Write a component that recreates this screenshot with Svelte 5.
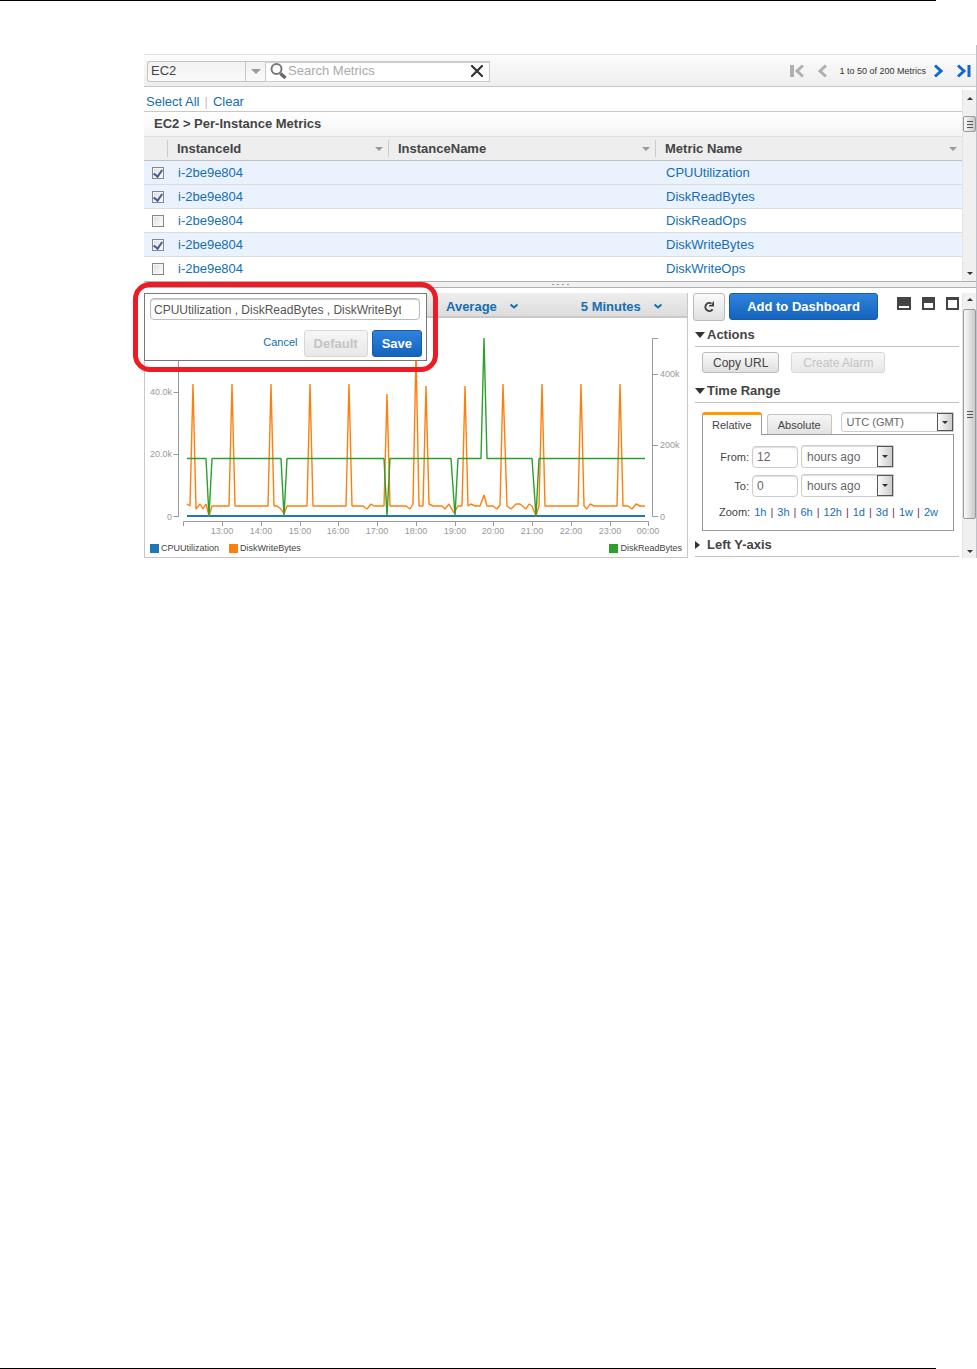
<script>
  let service = $state('EC2');
  let search = $state('');
  let graphTitle = $state('CPUUtilization , DiskReadBytes , DiskWriteBytes');
  let from = $state('12');
  let to = $state('0');
  let rows = $state([
    { id: 'i-2be9e804', metric: 'CPUUtilization', on: true },
    { id: 'i-2be9e804', metric: 'DiskReadBytes', on: true },
    { id: 'i-2be9e804', metric: 'DiskReadOps', on: false },
    { id: 'i-2be9e804', metric: 'DiskWriteBytes', on: true },
    { id: 'i-2be9e804', metric: 'DiskWriteOps', on: false }
  ]);
  const zooms = ['1h', '3h', '6h', '12h', '1d', '3d', '1w', '2w'];
  const hours = ['13:00', '14:00', '15:00', '16:00', '17:00', '18:00', '19:00', '20:00', '21:00', '22:00', '23:00', '00:00'];
  const hourX = (i) => Math.round(77 + i * 38.75);

  const writes =
    '42,186 45,188 48,66 51,191 55,186 58,191 61,186 64,198 67,188 84,188 87,66 90,188 123,188 126,66 129,188 132,188 136,191 139,196 142,188 162,188 165,66 168,188 201,188 204,66 207,188 218,188 222,191 226,186 229,188 239,188 242,76 245,188 261,188 265,191 268,186 271,34 274,188 278,188 281,68 284,186 288,188 297,188 300,191 304,186 309,195 313,188 317,188 320,68 323,188 326,186 330,188 335,188 339,177 342,188 348,188 352,191 355,187 358,66 362,188 366,191 371,186 375,186 381,191 384,186 387,188 391,198 394,188 397,66 400,188 433,188 436,66 439,188 442,191 445,186 449,188 472,188 475,66 478,188 483,188 487,191 491,186 495,188 500,188';
  const reads =
    '42,140.5 61,140.5 64,198 67,140.5 136,140.5 139,198 142,140.5 239,140.5 242,198 245,140.5 306,140.5 310,198 313,140.5 336,140.5 339,20 342,140.5 387,140.5 391,198 394,140.5 500,140.5';
</script>

<div class="page">
  <main class="console">
    <form class="toolbar" onsubmit={(e) => e.preventDefault()}>
      <div class="service">
        <select aria-label="Service" bind:value={service}><option>EC2</option></select>
        <span class="service-arrow"><i class="tri"></i></span>
      </div>
      <div class="search">
        <svg width="17" height="17" viewBox="0 0 17 17" aria-hidden="true">
          <circle cx="6.5" cy="6" r="5" fill="#fff" stroke="#777" stroke-width="2" />
          <path d="M10.5 10.5l5 4.5" stroke="#666" stroke-width="3.4" />
        </svg>
        <input aria-label="Search Metrics" placeholder="Search Metrics" bind:value={search} />
        <button class="bare" type="button" aria-label="Clear search" onclick={() => (search = '')}>
          <svg width="14" height="14" viewBox="0 0 14 14"><path d="M2 2l10 10M12 2L2 12" stroke="#333" stroke-width="2.2" stroke-linecap="round" /></svg>
        </button>
      </div>
      <nav class="pager" aria-label="Pages">
        <button class="bare" type="button" aria-label="First page" disabled>
          <svg width="14" height="14" viewBox="0 0 14 14" fill="none" stroke="#b0b0b0"><path d="M2 1v12" stroke-width="4" /><path d="M13 1.5L7 7l6 5.5" stroke-width="3" /></svg>
        </button>
        <button class="bare prev" type="button" aria-label="Previous page" disabled>
          <svg width="9" height="14" viewBox="0 0 9 14" fill="none" stroke="#b0b0b0"><path d="M8 1.5L2 7l6 5.5" stroke-width="3" /></svg>
        </button>
        <span>1 to 50 of 200 Metrics</span>
        <button class="bare next" type="button" aria-label="Next page">
          <svg width="9" height="14" viewBox="0 0 9 14" fill="none" stroke="#1168cf"><path d="M1 1.5L7 7l-6 5.5" stroke-width="3" /></svg>
        </button>
        <button class="bare" type="button" aria-label="Last page">
          <svg width="14" height="14" viewBox="0 0 14 14" fill="none" stroke="#1168cf"><path d="M1 1.5L7 7l-6 5.5" stroke-width="3" /><path d="M12 1v12" stroke-width="3" /></svg>
        </button>
      </nav>
    </form>

    <section class="metrics">
      <div class="list">
        <div class="pick"><a href="#all">Select All</a><span>|</span><a href="#clear">Clear</a></div>
        <h2 class="group">EC2 &gt; Per-Instance Metrics</h2>
        <table>
          <colgroup><col class="c-check" /><col class="c-id" /><col class="c-name" /><col /></colgroup>
          <thead>
            <tr>
              <th aria-label="Selected"></th>
              <th><div>InstanceId<i class="tri"></i></div></th>
              <th><div>InstanceName<i class="tri"></i></div></th>
              <th><div>Metric Name<i class="tri"></i></div></th>
            </tr>
          </thead>
          <tbody>
            {#each rows as row}
              <tr class:on={row.on}>
                <td class="check"><input type="checkbox" aria-label={row.metric} bind:checked={row.on} /></td>
                <td>{row.id}</td>
                <td></td>
                <td>{row.metric}</td>
              </tr>
            {/each}
          </tbody>
        </table>
      </div>
      <div class="scroll upper" aria-hidden="true">
        <i class="up"></i>
        <div class="thumb"><i class="grip"></i></div>
        <i class="down"></i>
      </div>
    </section>

    <div class="splitter" aria-hidden="true"><i></i><i></i><i></i><i></i></div>

    <section class="lower">
      <div class="chart">
        <div class="chart-head">
          <button class="bare" type="button">Average
            <svg width="10" height="7" viewBox="0 0 10 7"><path d="M1.5 1.5L5 4.5l3.5-3" fill="none" stroke="#146eb4" stroke-width="2" /></svg>
          </button>
          <button class="bare" type="button">5 Minutes
            <svg width="10" height="7" viewBox="0 0 10 7"><path d="M1.5 1.5L5 4.5l3.5-3" fill="none" stroke="#146eb4" stroke-width="2" /></svg>
          </button>
        </div>

        <svg class="plot" viewBox="0 0 542 220" role="img" aria-label="Metric values from 12:00 to 00:00">
          <g fill="none" stroke="#999">
            <path d="M28.5 74.5H33.5M28.5 136.5H33.5M28.5 198.5H33.5V12" />
            <path d="M513 20.5H507.5V198.5H513M507.5 56.5H513M507.5 127.5H513" />
            <path d="M38.5 208V203.5H503.5V208" />
            {#each hours as _, i}<path d="M{hourX(i) + 0.5} 203.5v4.5" />{/each}
          </g>
          <g class="ticks">
            <g text-anchor="end"><text x="27" y="77">40.0k</text><text x="27" y="139">20.0k</text><text x="27" y="202">0</text></g>
            <text x="515" y="59">400k</text><text x="515" y="130">200k</text><text x="515" y="202">0</text>
            <g text-anchor="middle">{#each hours as hour, i}<text x={hourX(i)} y="216">{hour}</text>{/each}</g>
          </g>
          <g fill="none" stroke-width="1.4" stroke-linejoin="bevel">
            <path d="M42 198H500" stroke="#1f77b4" stroke-width="2" />
            <polyline points={writes} stroke="#ff7f0e" />
            <polyline points={reads} stroke="#2ca02c" />
          </g>
        </svg>

        <div class="legend">
          <span><i class="blue"></i>CPUUtilization</span>
          <span><i class="orange"></i>DiskWriteBytes</span>
          <span class="right"><i class="green"></i>DiskReadBytes</span>
        </div>

        <form class="title-editor" onsubmit={(e) => e.preventDefault()}>
          <div class="field"><input aria-label="Graph title" bind:value={graphTitle} /></div>
          <div class="choices">
            <a href="#cancel">Cancel</a>
            <button class="btn big" type="button" disabled>Default</button>
            <button class="btn big primary" type="submit">Save</button>
          </div>
        </form>
      </div>

      <aside>
        <div class="top-actions">
          <button class="btn refresh" type="button" aria-label="Refresh">
            <svg width="14" height="14" viewBox="0 0 14 14"><path d="M9.5 3.6A4 4 0 1 0 10.6 9.4" fill="none" stroke="#444" stroke-width="2" /><path d="M12 1.5v5H7V5h2.500L11 1.5z" fill="#444" /></svg>
          </button>
          <button class="btn primary add" type="button">Add to Dashboard</button>
          <div class="views">
            <button class="bare" type="button" aria-label="Small graph"><svg width="14" height="13"><path d="M0 0h14v13H0z" fill="#444" /><path d="M2 9h10v2H2z" fill="#fff" /></svg></button>
            <button class="bare" type="button" aria-label="Split view"><svg width="13" height="13"><path d="M0 0h13v13H0z" fill="#444" /><path d="M2 6h9v5H2z" fill="#fff" /></svg></button>
            <button class="bare" type="button" aria-label="Full graph"><svg width="13" height="13"><path d="M0 0h13v13H0z" fill="#444" /><path d="M2 3h9v8H2z" fill="#fff" /></svg></button>
          </div>
        </div>

        <h3><i class="open"></i>Actions</h3>
        <div class="pair">
          <button class="btn small" type="button">Copy URL</button>
          <button class="btn small" type="button" disabled>Create Alarm</button>
        </div>

        <h3><i class="open"></i>Time Range</h3>
        <div class="range">
          <div class="tabs">
            <button class="tab active" type="button">Relative</button>
            <button class="tab" type="button">Absolute</button>
            <div class="drop zone"><select aria-label="Time zone"><option>UTC (GMT)</option></select><span><i class="down"></i></span></div>
          </div>
          <div class="box">
            <div class="line">
              <label for="from">From:</label><input id="from" bind:value={from} />
              <div class="drop"><select aria-label="From unit"><option>hours ago</option></select><span><i class="down"></i></span></div>
            </div>
            <div class="line">
              <label for="to">To:</label><input id="to" bind:value={to} />
              <div class="drop"><select aria-label="To unit"><option>hours ago</option></select><span><i class="down"></i></span></div>
            </div>
            <div class="zoom"><b>Zoom:</b>{#each zooms as z, i}{#if i}<span>|</span>{/if}<a href="#{z}">{z}</a>{/each}</div>
          </div>
        </div>

        <h3><i class="closed"></i>Left Y-axis</h3>
      </aside>

      <div class="scroll side" aria-hidden="true">
        <i class="up"></i>
        <div class="thumb"><i class="grip"></i></div>
        <i class="down"></i>
      </div>
    </section>
  </main>
</div>

<style>
  :global(body) { margin: 0; background: #fff; }
  .page, .page * { box-sizing: border-box; }
  .page {
    display: flex; flex-direction: column; min-height: 100vh;
    font: 13px/16px "Liberation Sans", Arial, sans-serif; color: #444;
  }
  .page::before, .page::after { content: ""; height: 1px; margin-right: 41px; background: #000; }
  .page::after { margin-top: auto; }
  .console { margin: 44px 0 40px 144px; padding-top: 9px; border-right: 1px solid #bcc3cc; }
  input, select, button { font: inherit; color: inherit; margin: 0; border-radius: 0; outline: 0; min-width: 0; }
  select { appearance: none; background: none; border: 0; padding: 0; }
  a { color: #146eb4; text-decoration: none; }
  .bare { display: flex; align-items: center; padding: 0; border: 0; background: none; }
  svg { display: block; flex: none; }
  i { flex: none; }
  .tri { border: 4px solid transparent; border-top-color: #999; border-bottom: 0; }

  .toolbar {
    display: flex; align-items: center; height: 33px; padding: 1px 5px 0 3px;
    border-top: 1px solid #e0e0e0; border-bottom: 1px solid #c8c8c8;
    background: linear-gradient(#fcfcfc, #eee);
  }
  .service { display: flex; width: 118px; height: 21px; border: 1px solid #c4c4c4; border-right: 0; border-radius: 3px 0 0 3px; background: linear-gradient(#f2f2f2, #fafafa); }
  .service select { flex: 1; padding: 0 3px; }
  .service-arrow { display: grid; place-items: center; width: 20px; border-left: 1px solid #c4c4c4; pointer-events: none; }
  .service-arrow .tri { border-width: 5px 5px 0; }
  .search { display: flex; align-items: center; gap: 1px; width: 225px; height: 21px; padding: 0 5px 0 4px; border: 1px solid #ccc; background: #fff; box-shadow: inset 0 1px 1px #ccc; }
  .search input { flex: 1; padding: 0; border: 0; background: none; }
  .search input::placeholder { color: #aaa; opacity: 1; }
  .pager { display: flex; align-items: center; margin-left: auto; font-size: 9px; color: #333; }
  .prev { margin: 0 12px 0 14px; }
  .next { margin: 0 14px 0 8px; }

  .metrics { display: flex; }
  .list { flex: 1; min-width: 0; }
  .pick { display: flex; gap: 5px; height: 25px; padding: 7px 2px 0; border-bottom: 1px solid #c8c8c8; }
  .pick span { color: #d8b8b8; }
  .group { margin: 0; height: 25px; padding: 4px 10px; border-bottom: 1px solid #e0e0e0; background: linear-gradient(#fff, #f4f4f4); font: bold 13px/16px "Liberation Sans", Arial, sans-serif; }
  table { width: 100%; border-collapse: separate; border-spacing: 0; table-layout: fixed; }
  .c-check { width: 23px; }
  .c-id { width: 221px; }
  .c-name { width: 267px; }
  th { height: 24px; padding: 3px 0; border-bottom: 1px solid #c0c0c0; background: #eee; text-align: left; }
  th div { display: flex; align-items: center; justify-content: space-between; height: 17px; padding: 0 5px 0 9px; border-left: 1px solid #ccc; }
  td { height: 24px; padding: 0 11px; border-bottom: 1px solid #dcdcdc; color: #146eb4; }
  tbody tr:last-child td { border-bottom: 0; }
  .on td { background: #eaf2fe; }
  td.check { padding: 0 0 0 8px; }
  .check input { display: grid; place-items: center; appearance: none; width: 12px; height: 12px; border: 1px solid #888; background: linear-gradient(135deg, #ddd, #fff); box-shadow: inset 0 0 0 1px #f4f4f4; }
  .check input:checked::after { content: ""; width: 4px; height: 7px; margin-bottom: 3px; border: solid #4a5c98; border-width: 0 2px 2px 0; transform: rotate(35deg); }

  .scroll { display: flex; flex-direction: column; align-items: center; width: 14px; background: #f0f0f0; border-left: 1px solid #e4e4e4; }
  .up { border: 3px solid transparent; border-bottom-color: #333; border-top: 0; }
  .down { border: 3px solid transparent; border-top-color: #333; border-bottom: 0; }
  .scroll .down { margin-top: auto; }
  .thumb { display: grid; place-items: center; width: 13px; border: 1px solid #999; border-radius: 2px; background: linear-gradient(90deg, #fafafa, #c9c9c9); }
  .grip { width: 6px; height: 7px; background: repeating-linear-gradient(#555 0 1px, transparent 1px 3px); }
  .upper { margin-top: 3px; padding: 7px 0 6px; }
  .upper .thumb { height: 16px; margin-top: 16px; }

  .splitter { display: flex; justify-content: center; gap: 3px; height: 7px; padding-top: 2px; border: 1px solid #b0b0b0; border-width: 1px 0; background: #f0f0f0; }
  .splitter i { width: 2px; height: 1px; background: #999; }

  .lower { display: flex; padding-top: 5px; }
  .chart { position: relative; flex: 1; min-width: 0; border: 1px solid #c8c8c8; border-top: 0; }
  .chart-head { display: flex; gap: 62px; height: 25px; padding: 2px 0 0 301px; border-bottom: 2px solid #c8c8c8; background: linear-gradient(#eee, #dcdcdc); }
  .chart-head button { gap: 12px; height: 23px; color: #146eb4; font-weight: bold; white-space: nowrap; }
  .plot { width: 100%; height: auto; }
  .ticks { font-size: 9px; fill: #999; }
  .legend { display: flex; gap: 10px; padding: 2px 5px 1px; font-size: 9px; }
  .legend span { display: flex; align-items: center; gap: 2px; }
  .legend i { width: 9px; height: 9px; }
  .legend .right { margin-left: auto; }
  .blue { background: #1f77b4; }
  .orange { background: #ff7f0e; }
  .green { background: #2ca02c; }

  .title-editor { position: absolute; top: 0; left: -1px; width: 283px; padding: 4px 4px 3px 5px; border: 1px solid #777; background: #fff; }
  .title-editor::after { content: ""; position: absolute; inset: -12px; border: 5px solid #ed1c24; border-radius: 17px; pointer-events: none; }
  .field { padding: 2px 18px 2px 3px; border: 1px solid #bbb; border-radius: 4px; box-shadow: inset 0 1px 1px #ccc; margin-right: 2px; height: 22px; }
  .field input { display: block; width: 100%; height: 17px; padding: 0; border: 0; background: none; font-size: 12px; color: #555; }
  .choices { display: flex; justify-content: flex-end; gap: 4px; margin-top: 10px; font-size: 11px; line-height: 24px; }
  .choices a { margin-right: 2px; }

  .btn { border: 1px solid #bbb; border-radius: 3px; background: linear-gradient(#fafafa, #e0e0e0); padding: 0; white-space: nowrap; }
  .btn:disabled { color: #c4c4c4; border-color: #d8d8d8; background: linear-gradient(#f6f6f6, #e8e8e8); }
  .primary { border-color: #165ca8; background: linear-gradient(#2f83dc, #1463bd); color: #fff; font-weight: bold; }
  .big { height: 27px; padding: 0 9px; font-size: 13px; font-weight: bold; }

  aside { display: flex; flex-direction: column; width: 266px; margin: 0 3px 0 5px; }
  .top-actions { display: flex; gap: 4px; }
  .refresh { display: grid; place-items: center; width: 32px; height: 28px; }
  .add { width: 149px; height: 27px; }
  .views { display: flex; align-items: flex-start; gap: 11px; margin: 4px 0 0 auto; }
  h3 { display: flex; align-items: center; gap: 2px; margin: 6px 0 0 2px; height: 20px; padding-bottom: 3px; border-bottom: 1px solid #c0c0c0; font-size: 13px; }
  .open { border: 5px solid transparent; border-top: 6px solid #333; border-bottom: 0; }
  .closed { border: 4px solid transparent; border-left: 5px solid #333; border-right: 0; margin-right: 5px; }
  .pair { display: flex; gap: 12px; margin: 5px 0 4px 9px; }
  .small { height: 21px; padding: 0 10px; font-size: 12px; }
  .small:disabled { padding: 0 11px; }
  .range { margin: 9px 5px 0 9px; font-size: 11px; }
  .tabs { display: flex; align-items: flex-end; gap: 5px; height: 22px; }
  .tab { height: 20px; padding: 0 10px; border: 1px solid #c4c4c4; border-bottom: 0; border-radius: 3px 3px 0 0; background: linear-gradient(#f6f6f6, #e2e2e2); }
  .active { position: relative; height: 23px; margin-bottom: -1px; padding: 0 9px; border-color: #999; border-top: 3px solid #f90; background: #fff; z-index: 1; }
  .drop { display: flex; width: 93px; height: 23px; border: 1px solid #ccc; border-radius: 3px 0 0 3px; font-size: 12px; color: #666; box-shadow: inset 0 1px 1px #ddd; }
  .drop select { flex: 1; padding: 0 5px; }
  .drop span { display: grid; place-items: center; width: 16px; border: 1px solid #555; background: linear-gradient(90deg, #fafafa, #ccc); pointer-events: none; }
  .zone { flex: 1; height: 20px; margin: 0 0 2px 4px; font-size: 11px; }
  .box { height: 97px; padding: 10px 0 0; border: 1px solid #999; }
  .line { display: flex; align-items: center; gap: 3px; margin-bottom: 6px; }
  .line label { width: 46px; text-align: right; }
  .line input { width: 46px; height: 22px; padding: 0 4px; border: 1px solid #ccc; border-radius: 4px; font-size: 12px; color: #666; box-shadow: inset 0 1px 1px #ddd; }
  .zoom { display: flex; gap: 4px; padding: 1px 0 0 16px; }
  .zoom b { font-weight: normal; }
  .zoom span { color: #703060; }
  .side { padding: 5px 0; }
  .side .thumb { height: 210px; margin-top: 8px; }
</style>
